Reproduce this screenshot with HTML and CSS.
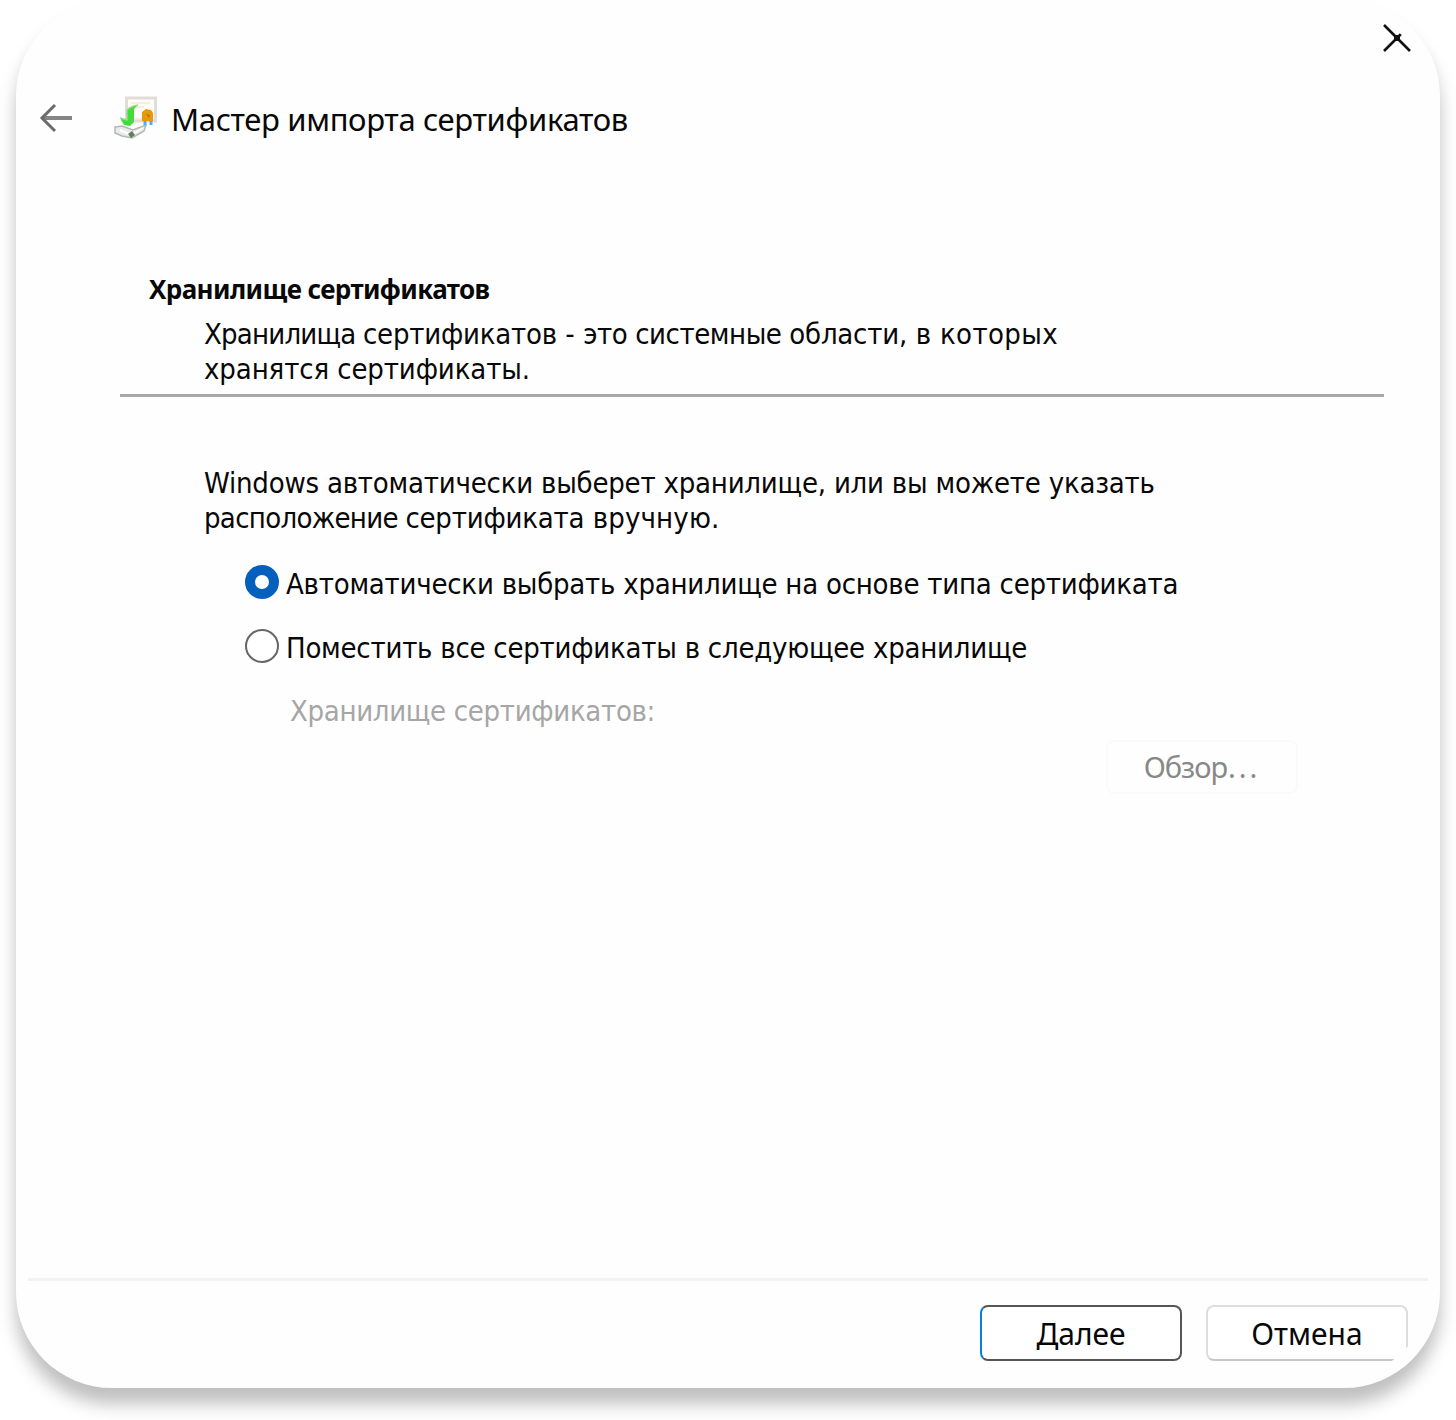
FILE: index.html
```html
<!DOCTYPE html>
<html lang="ru">
<head>
<meta charset="utf-8">
<title>Мастер импорта сертификатов</title>
<link rel="stylesheet" href="styles.css">
</head>
<body>
<main class="window">
<div class="surface">
  <div class="titlebar">
    <button class="icon-button" aria-label="Закрыть">
      <svg width="28" height="28" viewBox="0 0 28 28"><path d="M1 1L27 27M27 1L1 27" stroke="#111" stroke-width="2.6" fill="none"/><path d="M11 11H17V17H11Z" fill="#111"/></svg>
    </button>
  </div>
  <header class="header">
    <button class="icon-button" aria-label="Назад">
      <svg width="34" height="30" viewBox="0 0 34 30"><path d="M33 15H3" stroke="#858585" stroke-width="4"/><path d="M16 2L3 15L16 28" fill="none" stroke="#6b6b6b" stroke-width="3"/></svg>
    </button>
    <svg class="cert-icon" width="44" height="44" viewBox="0 0 44 44">
      <rect x="12.500" y="2" width="29" height="23" fill="#fffdf8" stroke="#e2dcd8" stroke-width="3"/>
      <path d="M17 7H36M17 11H30M18 23H30" stroke="#f5e6d5" stroke-width="1.500"/>
      <path d="M1 31L8 30L19 34L32 29L30 35L18 42L8 40L1 37Z" fill="#e9ebea" stroke="#b4b9b7" stroke-width="1.500"/>
      <path d="M6 34L17 39L29 32" stroke="#fff" stroke-width="2" fill="none"/>
      <path d="M14 38L18 35L21 39L17 42Z" fill="#65815c"/>
      <path d="M24 9L20 13V26L16 30L10 29L6 22L13 24V14Q17 10 24 9Z" fill="#43dc3c"/>
      <path d="M6 22L13 24V14Q17 10 24 9" stroke="#9bd98f" stroke-width="1.500" fill="none"/>
      <path d="M28 16L32 13L37 14L39 17V25H28Z" fill="#e69a09"/>
      <path d="M32 18L36 19L35 22Z" fill="#b77505"/>
      <path d="M31 25V29M37 25V29" stroke="#57aaf4" stroke-width="3"/>
    </svg>
    <h1 class="title">Мастер импорта сертификатов</h1>
  </header>
  <section class="intro">
    <h2 class="heading">Хранилище сертификатов</h2>
    <p class="text"><span class="fit-c">Хранилища </span><span class="fit-a">сертификатов</span><span class="dash"> - </span><span class="fit-d">это системные </span><span class="fit-a">области,</span><span class="fit-f"> в которых</span><br><span class="fit-b">хранятся сертификаты.</span></p>
  </section>
  <section class="content">
    <p class="text"><span class="fit-a">Windows автоматически выберет хранилище, или вы можете указать</span><br><span class="fit-e">расположение </span><span class="fit-a">сертификата</span><span class="fit-g"> вручную.</span></p>
    <div class="options">
      <label class="option"><span class="radio radio-checked"></span>Автоматически выбрать хранилище на основе типа сертификата</label>
      <label class="option"><span class="radio"></span>Поместить все сертификаты в следующее хранилище</label>
    </div>
    <p class="store-label">Хранилище сертификатов:</p>
    <button class="button browse" disabled>Обзор<span class="dots">...</span></button>
  </section>
  <footer class="footer">
    <button class="button next">Далее</button>
    <button class="button cancel">Отмена</button>
  </footer>
</div>
</main>
</body>
</html>
```
FILE: styles.css
```css
* { box-sizing: border-box; }
body { margin: 0; min-height: 1420px; background: #fff; color: #080808; }
h1, h2, p { margin: 0; }
svg { display: block; }
.window {
  height: 1388px; margin: 0 16px;
  background: #fefefe; border-radius: 96px;
  box-shadow: 0 16px 17px rgba(0, 0, 0, .25);
  font: 29px/35px "DejaVu Sans Condensed", "DejaVu Sans", sans-serif;
  font-stretch: condensed;
}
.surface { display: flex; flex-direction: column; height: 100%; clip-path: inset(12px round 84px); }
.titlebar { display: flex; justify-content: flex-end; height: 94px; padding: 24px 29px 0 0; }
.icon-button { padding: 0; border: 0; background: none; height: max-content; }
.header { display: flex; height: 169px; padding-left: 23px; }
.header .icon-button { margin-top: 9px; }
.cert-icon { margin: 2px 0 0 41px; }
.title { margin: 5px 0 0 13px; font: 400 31px/40px "Noto Sans", sans-serif; letter-spacing: -.35px; white-space: nowrap; }
.intro { height: 134px; margin: 0 56px 0 104px; padding: 9px 0 0 29px; border-bottom: 3px solid #a8a8a8; }
.heading { font: 700 26px/35px "Noto Sans", sans-serif; letter-spacing: -.6px; }
.text { white-space: nowrap; }
.intro .text { margin: 10px 0 0 55px; }
.fit-a { letter-spacing: -.22px; }
.dash { letter-spacing: .1px; }
.fit-b { letter-spacing: -.12px; }
.fit-c { letter-spacing: -.8px; }
.fit-d { letter-spacing: -.45px; }
.fit-e { letter-spacing: -.7px; }
.fit-f { letter-spacing: .35px; }
.fit-g { letter-spacing: .15px; }
.content { flex: 1; display: flex; flex-direction: column; padding: 69px 142px 0 188px; }
.options { display: flex; flex-direction: column; gap: 29px; margin: 31px 0 0 41px; }
.option { display: flex; align-items: center; gap: 7px; letter-spacing: -.24px; white-space: nowrap; }
.radio { flex: none; width: 34px; height: 34px; margin-top: -5px; border: 2px solid #666; border-radius: 50%; background: #fff; }
.radio-checked { border: 10px solid #0560bd; }
.store-label { margin: 28px 0 0 86px; color: #a6a6a6; letter-spacing: -.32px; }
.button { display: flex; align-items: center; justify-content: center; width: 202px; height: 56px; padding: 2px 0 0; border: 2px solid #d5d5d5; border-radius: 8px; background: #fff; color: #080808; font: 30px/40px "Noto Sans", sans-serif; }
.browse { align-self: flex-end; width: 192px; height: 54px; margin-top: 11px; padding: 0; border-color: #fafafa; background: #fefefe; color: #888; font-size: 29px; letter-spacing: -1px; }
.dots { margin-left: 1px; letter-spacing: 3px; }
.footer { display: flex; justify-content: flex-end; gap: 24px; height: 110px; margin: 0 12px; padding: 24px 20px 0 0; border-top: 3px solid #f2f2f2; }
.next { border-color: #555 #555 #555 #087ee0; }
.cancel { border-color: #ddd #ddd #c8c8c8; }
```
